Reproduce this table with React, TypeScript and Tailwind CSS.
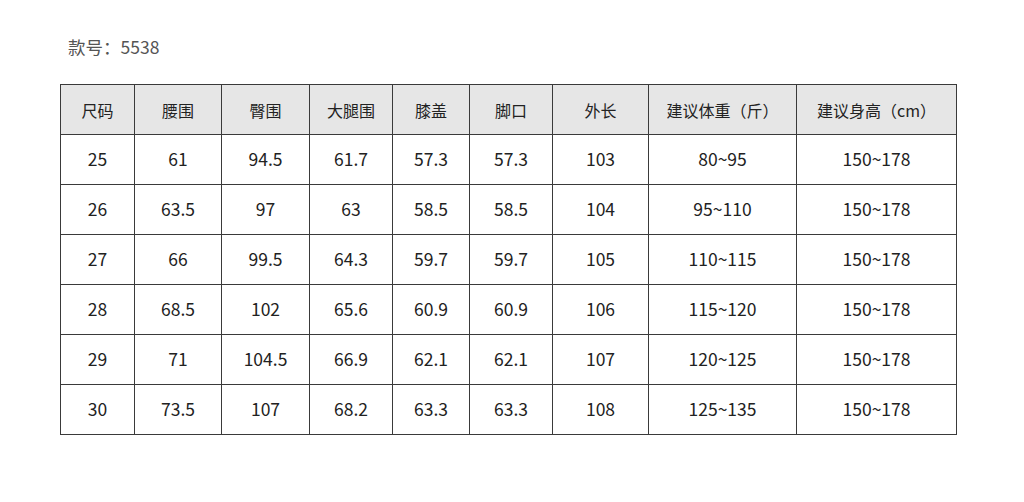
import React from "react";

const headers = ["尺码", "腰围", "臀围", "大腿围", "膝盖", "脚口", "外长", "建议体重（斤）", "建议身高（cm）"];
const widths = ["w-[74px]", "w-[87px]", "w-[88px]", "w-[83px]", "w-[77px]", "w-[83px]", "w-[96px]", "w-[148px]", "w-[160px]"];
const rows = [
  ["25", "61", "94.5", "61.7", "57.3", "57.3", "103", "80~95", "150~178"],
  ["26", "63.5", "97", "63", "58.5", "58.5", "104", "95~110", "150~178"],
  ["27", "66", "99.5", "64.3", "59.7", "59.7", "105", "110~115", "150~178"],
  ["28", "68.5", "102", "65.6", "60.9", "60.9", "106", "115~120", "150~178"],
  ["29", "71", "104.5", "66.9", "62.1", "62.1", "107", "120~125", "150~178"],
  ["30", "73.5", "107", "68.2", "63.3", "63.3", "108", "125~135", "150~178"],
];

export default function App() {
  return (
    <div
      className="w-[1024px] h-[502px] bg-white"
      style={{ fontFamily: '"Noto Sans CJK SC", "Noto Sans", sans-serif' }}
    >
      <div className="pt-[35px] pl-[68px] text-[17.5px] leading-[24px] text-[#555]">款号：5538</div>
      <table className="ml-[60px] mt-[25px] border-collapse text-[#222]">
        <thead>
          <tr className="h-[50px] bg-[#e6e6e6]">
            {headers.map((h, i) => (
              <th key={i} className={`${widths[i]} border border-[#3a3a3a] font-normal text-[16px] text-center p-0`}>
                {h}
              </th>
            ))}
          </tr>
        </thead>
        <tbody>
          {rows.map((r, ri) => (
            <tr key={ri} className="h-[50px]">
              {r.map((c, ci) => (
                <td key={ci} className="border border-[#3a3a3a] text-center text-[17.5px] p-0">
                  {c}
                </td>
              ))}
            </tr>
          ))}
        </tbody>
      </table>
    </div>
  );
}
